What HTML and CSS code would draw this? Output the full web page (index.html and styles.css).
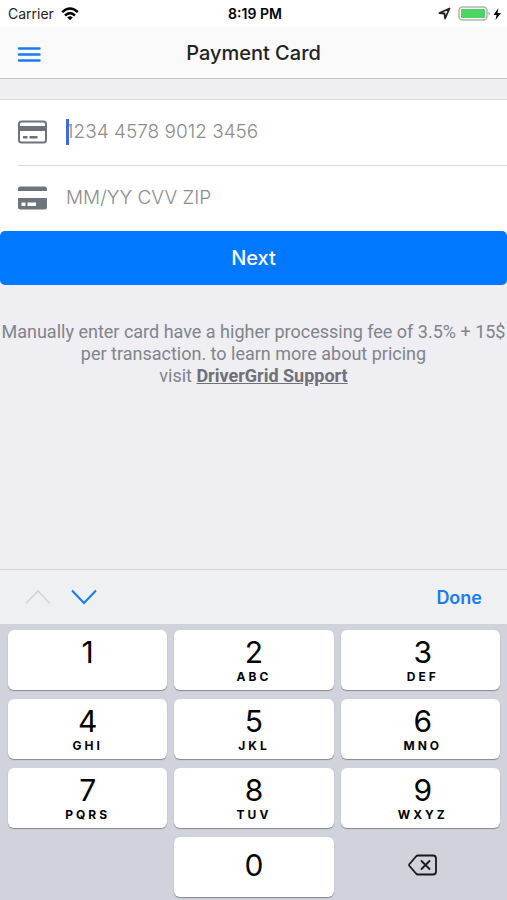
FILE: index.html
```html
<!DOCTYPE html>
<html lang="en">
<head>
<meta charset="utf-8">
<meta name="viewport" content="width=device-width, initial-scale=1">
<title>Payment Card</title>
<link rel="stylesheet" href="styles.css">
</head>
<body>
<div class="status">
  <div class="status-left">
    <span>Carrier</span>
    <svg width="18" height="14" viewBox="0 0 18 14" aria-hidden="true"><g fill="none" stroke="#000" stroke-width="2.5"><path d="M1.2 5.2Q9-2.2 16.8 5.2"/><path d="M4 8.5Q9 3.8 14 8.5"/></g><path d="M6.2 10.5Q9 8.200 11.800 10.500L9 13.300Z"/></svg>
  </div>
  <span class="status-time">8:19 PM</span>
  <div class="status-right">
    <svg width="13" height="13" viewBox="0 0 13 13" aria-hidden="true"><path d="M1.500 6L11.500 1.500L7 11.500L6.500 6.500Z" fill="none" stroke="#222" stroke-width="1.800" stroke-linejoin="round"/></svg>
    <svg width="44" height="16" viewBox="0 0 44 16" aria-hidden="true"><rect x="1" y="1" width="28" height="13" rx="3.500" fill="#fff" stroke="#b2b2b2" stroke-width="1.500"/><rect x="3" y="3" width="24" height="9" rx="1" fill="#4bd562"/><path d="M30.500 5.500Q33 7.500 30.500 9.500Z" fill="#999"/><path d="M40.500 2L35.500 9H38.500L37.500 14L43 7H39.500Z"/></svg>
  </div>
</div>
<header class="navbar">
  <button class="menu" type="button" aria-label="Menu"><svg width="24" height="18" viewBox="0 0 24 18"><path d="M2 2.500H22.500M2 8.500H22.500M2 14.500H22.500" stroke="#187bf2" stroke-width="2.500" stroke-linecap="round"/></svg></button>
  <h1>Payment Card</h1>
</header>
<main>
  <form class="card-form">
    <div class="field active">
      <label for="number" aria-label="Card number"><svg width="30" height="24" viewBox="0 0 30 24"><rect x="1" y="1.500" width="27" height="21" rx="2.500" fill="#fff" stroke="#6d747c" stroke-width="2"/><path d="M1 6H28V11H1ZM5 16H9.500V18.500H5ZM11.500 16H19.500V18.500H11.500Z" fill="#6d747c"/></svg></label>
      <div class="entry"><input id="number" type="text" inputmode="numeric" placeholder="1234 4578 9012 3456"></div>
    </div>
    <div class="field">
      <label for="details" aria-label="Expiry, security code and ZIP"><svg width="30" height="24" viewBox="0 0 30 24"><path d="M0 5V3Q0 .5 2.500 .5H26.500Q29 .5 29 3V5ZM0 12H29V21Q29 23.500 26.500 23.500H2.500Q0 23.500 0 21ZM3.500 16.500V20H7.500V16.500ZM9.500 16.500V20H18V16.500Z" fill="#6d747c" fill-rule="evenodd"/></svg></label>
      <div class="entry"><input id="details" type="text" placeholder="MM/YY CVV ZIP"></div>
    </div>
    <button class="next" type="button">Next</button>
  </form>
  <p class="note">Manually enter card have a higher processing fee of 3.5% + 15$ per transaction. to learn more about pricing<br>visit <a href="#">DriverGrid Support</a></p>
</main>
<section class="keyboard" aria-label="Keyboard">
  <div class="toolbar">
    <div class="arrows">
      <button type="button" disabled aria-label="Previous field"><svg width="26" height="16" viewBox="0 0 26 16"><path d="M1 14.500L13 2L25 14.500" fill="none" stroke="#d5d6d8" stroke-width="1.800"/></svg></button>
      <button type="button" aria-label="Next field"><svg width="26" height="16" viewBox="0 0 26 16"><path d="M1 1.500L13 14L25 1.500" fill="none" stroke="#187bf2" stroke-width="2"/></svg></button>
    </div>
    <button class="done" type="button">Done</button>
  </div>
  <div class="keys">
    <button class="key" type="button"><span class="digit">1</span></button>
    <button class="key" type="button"><span class="digit">2</span><span class="letters">ABC</span></button>
    <button class="key" type="button"><span class="digit">3</span><span class="letters">DEF</span></button>
    <button class="key" type="button"><span class="digit">4</span><span class="letters">GHI</span></button>
    <button class="key" type="button"><span class="digit">5</span><span class="letters">JKL</span></button>
    <button class="key" type="button"><span class="digit">6</span><span class="letters">MNO</span></button>
    <button class="key" type="button"><span class="digit">7</span><span class="letters">PQRS</span></button>
    <button class="key" type="button"><span class="digit">8</span><span class="letters">TUV</span></button>
    <button class="key" type="button"><span class="digit">9</span><span class="letters">WXYZ</span></button>
    <button class="key zero" type="button"><span class="digit">0</span></button>
    <button class="delete" type="button" aria-label="Delete"><svg width="30" height="22" viewBox="0 0 30 22"><g fill="none" stroke="#17191c" stroke-linejoin="round" stroke-linecap="round"><path d="M10 1.500H25Q28 1.500 28 4.500V17.500Q28 20.500 25 20.500H10Q9 20.500 8 19.500L1.500 12Q.8 11 1.500 10L8 2.500Q9 1.500 10 1.500Z" stroke-width="1.800"/><path d="M13.500 7L21.500 15M21.500 7L13.500 15" stroke-width="1.800"/></g></svg></button>
  </div>
</section>
</body>
</html>
```
FILE: styles.css
```css
* {
  box-sizing: border-box;
}

body {
  margin: 0;
  min-height: 100vh;
  display: flex;
  flex-direction: column;
  background: #efeef3;
  color: #222;
  font-family: Inter, "Liberation Sans", sans-serif;
}

button {
  padding: 0;
  border: 0;
  background: none;
  font: inherit;
}

svg {
  display: block;
}

.status {
  display: grid;
  grid-template-columns: 1fr auto 1fr;
  align-items: center;
  height: 27px;
  padding: 0 5px 0 8px;
  background: #fff;
  font-size: 14px;
}

.status-left,
.status-right {
  display: flex;
  align-items: center;
  gap: 7px;
}

.status-right {
  justify-content: flex-end;
}

.status-time {
  color: #000;
  font-weight: 600;
}

.navbar {
  display: grid;
  grid-template-columns: 1fr auto 1fr;
  align-items: center;
  height: 52px;
  padding: 0 17px;
  border-bottom: 1px solid #c8c8ca;
  background: #fafafa;
}

.menu {
  justify-self: start;
  padding-top: 4px;
}

h1 {
  margin: 0;
  font-size: 20px;
  font-weight: 500;
}

main {
  flex: 1;
  padding-top: 20px;
}

.card-form {
  border-top: 1px solid #dededf;
  background: linear-gradient(#fff 0 150px, #efeef3 150px);
}

.field {
  display: flex;
  align-items: center;
  gap: 18px;
  height: 65px;
  margin-left: 18px;
  padding-bottom: 2px;
}

.field.active {
  height: 66px;
  border-bottom: 1px solid #d9d9dc;
}

.entry {
  position: relative;
  flex: 1;
}

.active .entry::before {
  content: "";
  position: absolute;
  top: 0;
  left: 0;
  width: 3px;
  height: 26px;
  background: #426be0;
}

.entry input {
  display: block;
  width: 100%;
  height: 26px;
  padding: 0;
  border: 0;
  outline: 0;
  background: none;
  font: 300 19px/24px Inter, "Liberation Sans", sans-serif;
}

.entry input::placeholder {
  color: #8c8c8c;
  opacity: 1;
}

.next {
  display: block;
  width: 100%;
  height: 54px;
  border-radius: 5px;
  background: #0078ff;
  color: #fff;
  font-size: 20px;
  font-weight: 500;
}

.note {
  margin: 36px 0 0;
  color: #80848c;
  font-family: Roboto, "Liberation Sans", sans-serif;
  font-size: 18px;
  line-height: 22px;
  text-align: center;
}

.note a {
  color: #6d7178;
  font-weight: 700;
}

.toolbar {
  display: flex;
  align-items: center;
  justify-content: space-between;
  height: 55px;
  padding: 0 25px;
  border-top: 1px solid #d5d5d9;
  background: #eff0f2;
}

.arrows {
  display: flex;
  gap: 20px;
}

.done {
  color: #187bf2;
  font-size: 18px;
  font-weight: 600;
}

.keys {
  display: grid;
  grid-template-columns: repeat(3, 1fr);
  grid-auto-rows: 60px;
  gap: 9px 7px;
  padding: 6px 7px 3px 8px;
  background: #d0d3db;
}

.key {
  display: flex;
  flex-direction: column;
  align-items: center;
  padding-top: 5px;
  border-radius: 6px;
  background: #fff;
  box-shadow: 0 1px 1px #85888d;
  color: #000;
}

.key:nth-child(3n),
.delete {
  padding-left: 5px;
}

.digit {
  font-size: 30px;
  line-height: 34px;
}

.letters {
  font-size: 12px;
  font-weight: 700;
  line-height: 16px;
  letter-spacing: 3px;
}

.zero {
  grid-column: 2;
  justify-content: center;
  padding: 0 0 4px;
}

.delete {
  display: grid;
  place-items: center;
  padding-bottom: 4px;
}
```
